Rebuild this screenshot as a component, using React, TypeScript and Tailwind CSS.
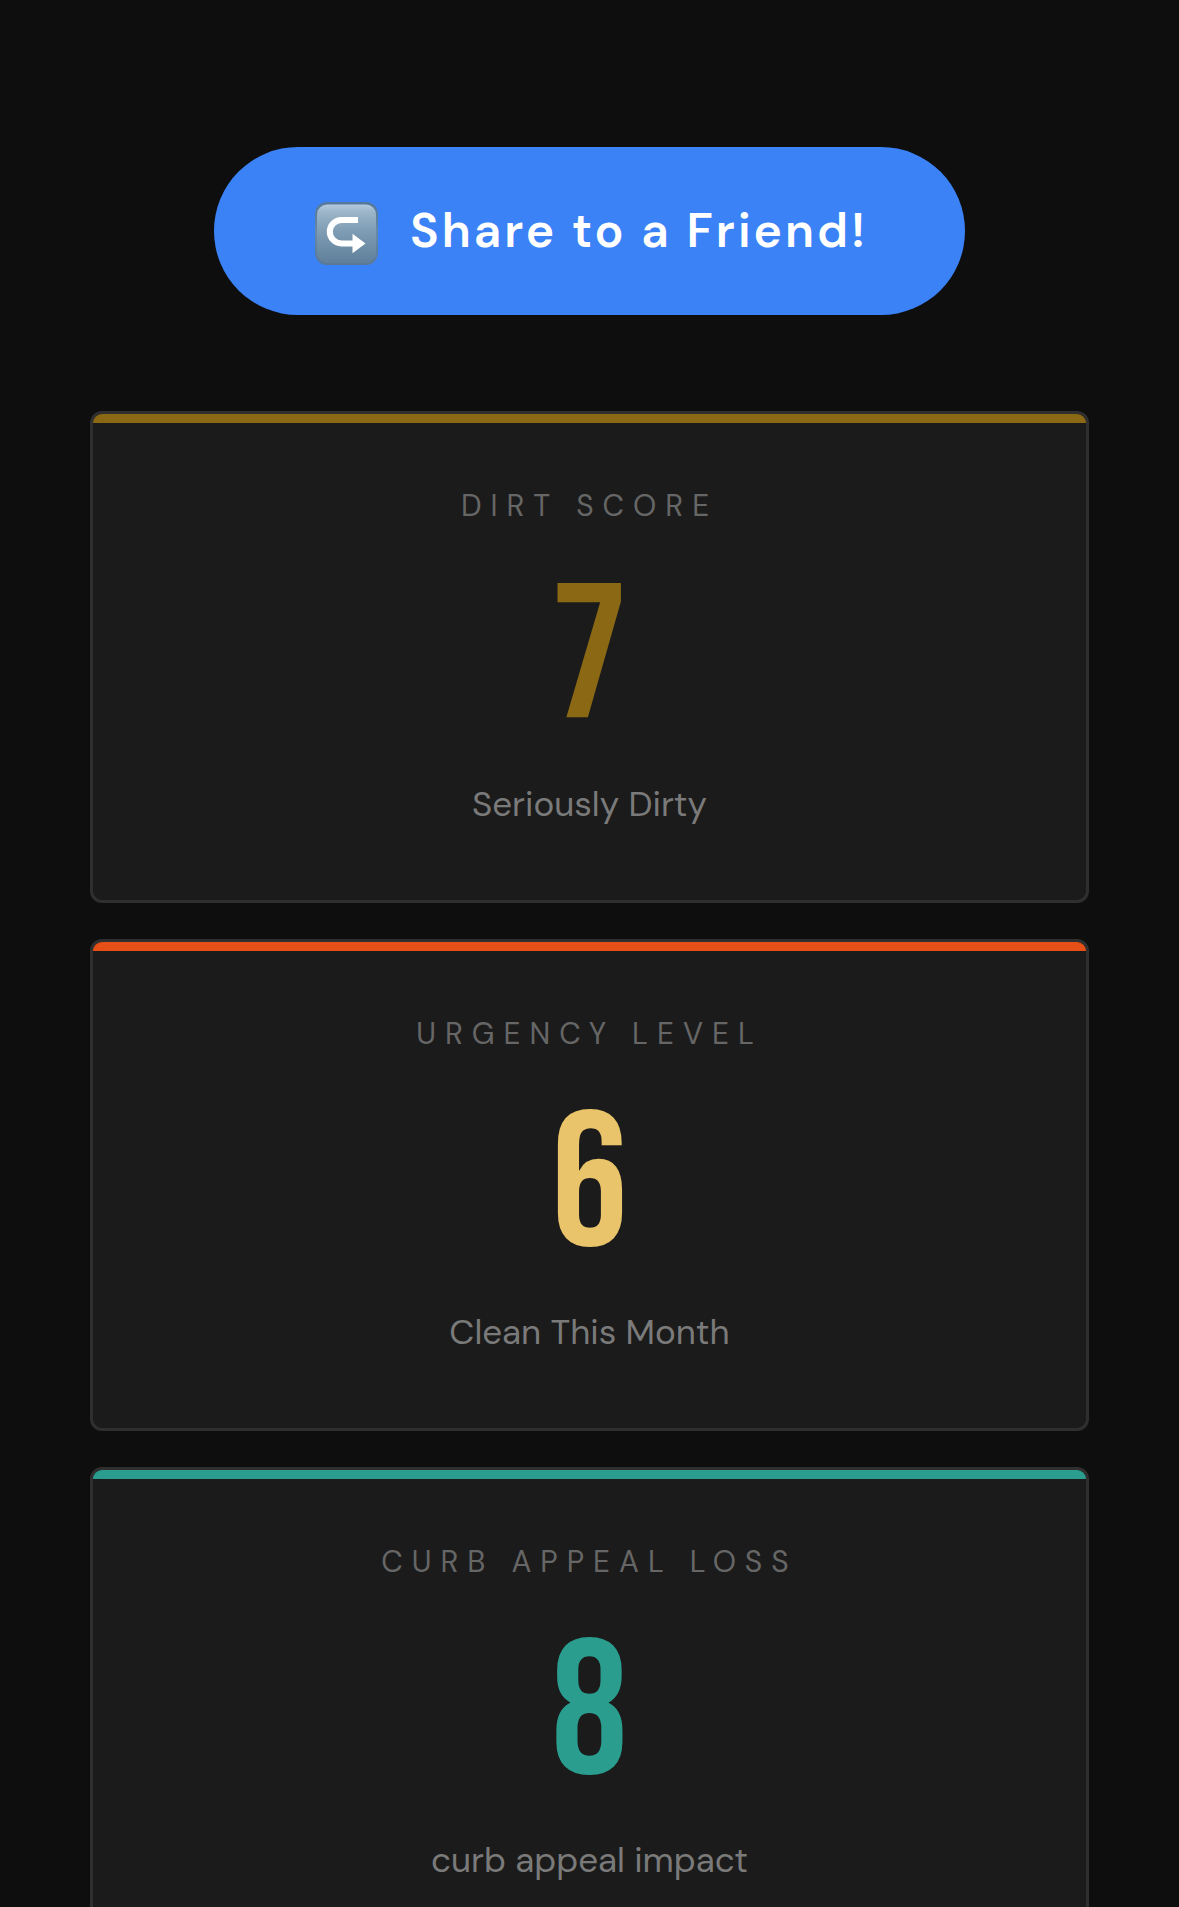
type Stat = {
  label: string;
  value: number;
  note: string;
  bar: string;
  text: string;
};

const stats: Stat[] = [
  { label: 'Dirt Score', value: 7, note: 'Seriously Dirty', bar: 'bg-[#8b6914]', text: 'text-[#8b6914]' },
  { label: 'Urgency Level', value: 6, note: 'Clean This Month', bar: 'bg-[#e65016]', text: 'text-[#e9c46a]' },
  { label: 'Curb Appeal Loss', value: 8, note: 'curb appeal impact', bar: 'bg-[#2a9d8f]', text: 'text-[#2a9d8f]' },
];

function ShareIcon() {
  return (
    <svg viewBox="0 0 63 63" className="mt-1 size-[63px] shrink-0" aria-hidden="true">
      <defs>
        <linearGradient id="key-face" x1="0" y1="0" x2="0" y2="1">
          <stop offset="0" stopColor="#b4cadd" />
          <stop offset="0.14" stopColor="#9bb4c8" />
          <stop offset="0.45" stopColor="#7f9db4" />
          <stop offset="1" stopColor="#5f7f9b" />
        </linearGradient>
        <linearGradient id="key-edge" x1="0" y1="0" x2="0" y2="1">
          <stop offset="0" stopColor="#557799" />
          <stop offset="0.5" stopColor="#6789a5" />
          <stop offset="1" stopColor="#587896" />
        </linearGradient>
      </defs>
      <rect width="63" height="63" rx="12" fill="url(#key-edge)" />
      <rect x="2" y="2.5" width="59" height="58.5" rx="10" fill="url(#key-face)" />
      <path d="M43 18H26.500a11.700 11.700 0 0 0 0 23.400H38" fill="none" stroke="#fff" strokeWidth="6" />
      <path d="M37.500 31.800 50.500 41.400 37.500 51.200Z" fill="#fff" />
    </svg>
  );
}

function StatCard({ stat }: { stat: Stat }) {
  return (
    <section className="overflow-hidden rounded-xl border-3 border-[#2f2f2f] bg-[#1b1b1b] text-center">
      <div className={`h-[9px] ${stat.bar}`} />
      <div className="px-8 pt-[59px] pb-[69px]">
        <h2 className="text-[30px] leading-[48px] tracking-[9px] text-[#666666] uppercase">{stat.label}</h2>
        <p className={`mt-[34px] font-['Bebas_Neue',Roboto_Condensed,sans-serif] text-[192px] leading-none ${stat.text}`}>
          {stat.value}
        </p>
        <p className="mt-[21px] text-[35px] leading-[54px] text-[#7a7a7a]">{stat.note}</p>
      </div>
    </section>
  );
}

export default function App() {
  return (
    <main className="min-h-screen bg-[#0e0e0e] px-[90px] pt-[147px] pb-[90px] font-['DM_Sans',Inter,sans-serif]">
      <div className="flex justify-center">
        <button
          type="button"
          className="flex h-[168px] items-center gap-8 rounded-full bg-[#3b82f6] pr-[97px] pl-[101px] text-[48px] font-semibold tracking-[3px] whitespace-nowrap text-white"
        >
          <ShareIcon />
          <span>Share to a Friend!</span>
        </button>
      </div>
      <div className="mt-24 grid gap-9">
        {stats.map((stat) => (
          <StatCard key={stat.label} stat={stat} />
        ))}
      </div>
    </main>
  );
}
